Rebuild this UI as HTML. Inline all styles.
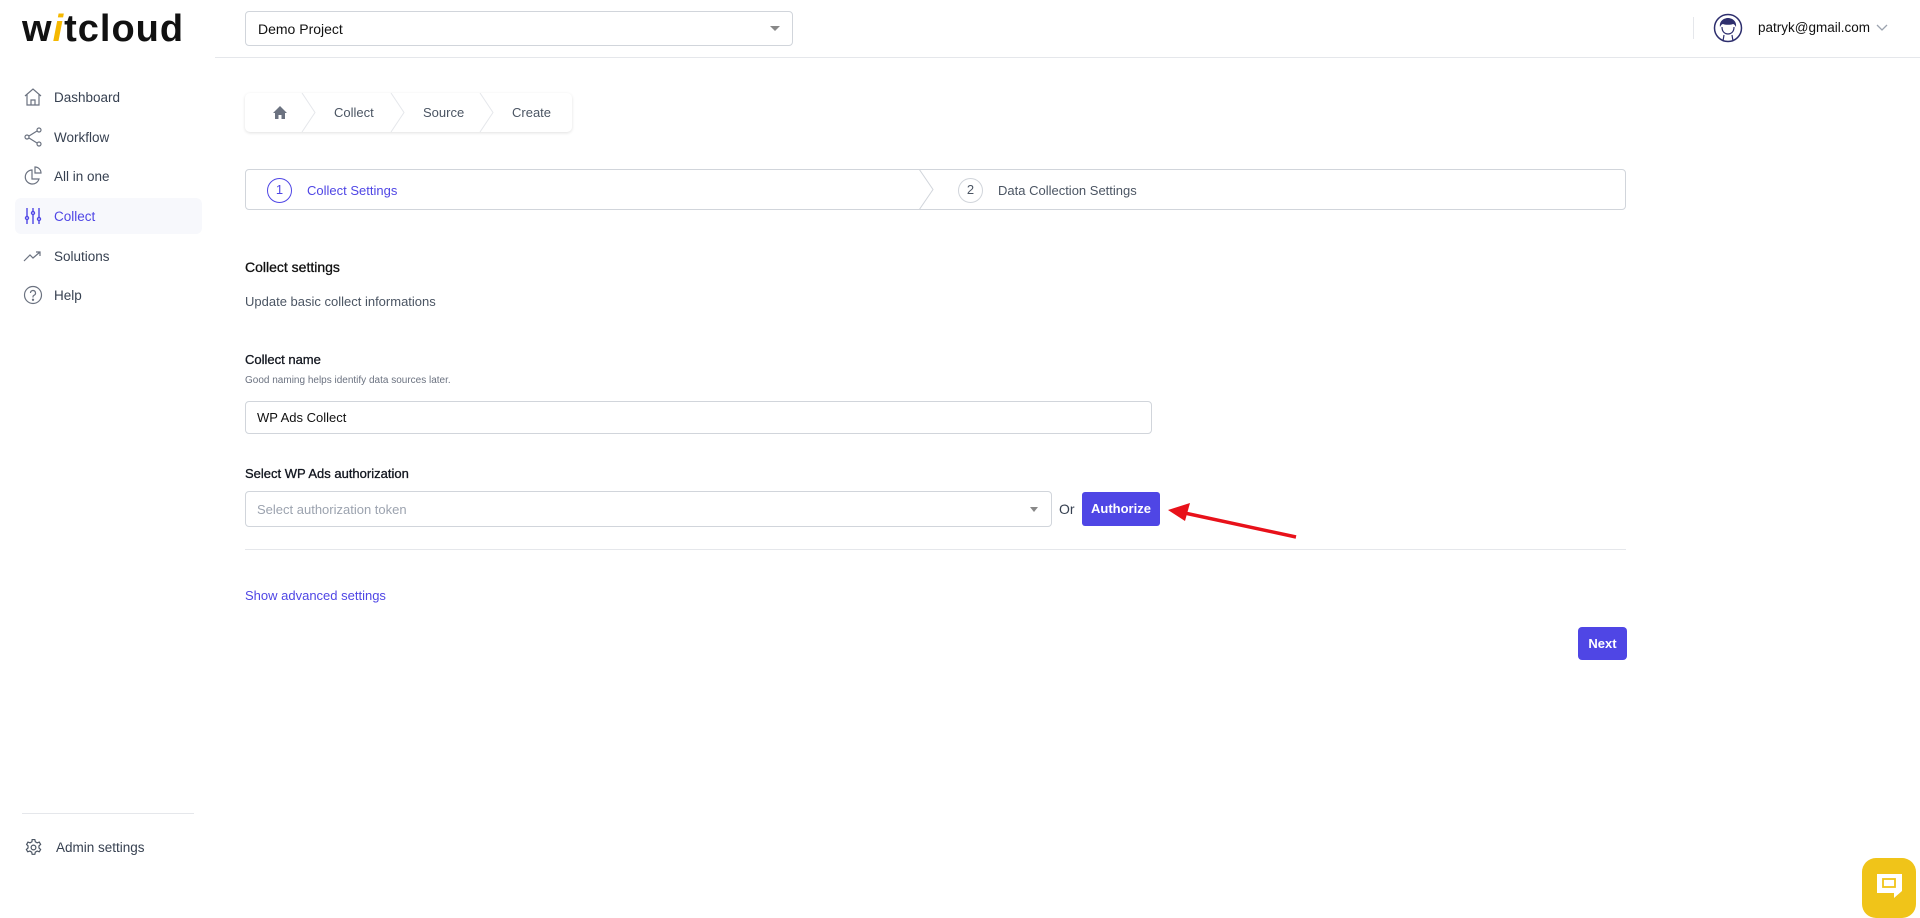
<!DOCTYPE html>
<html><head><meta charset="utf-8"><style>
*{box-sizing:border-box;margin:0;padding:0}
body{width:1920px;height:911px;overflow:hidden;background:#fff;font-family:"Liberation Sans",sans-serif;color:#1f2937;position:relative}
.abs{position:absolute}
.nav{position:absolute;left:15px;width:187px;height:36px;display:flex;align-items:center;font-size:13.5px;color:#374151;border-radius:6px}
.nav svg{position:absolute;left:8px}
.nav span{position:absolute;left:39px}
.lbl{position:absolute;font-size:14px;font-weight:bold;color:#111827}
</style></head><body>
<!-- logo -->
<div class="abs" style="left:22px;top:8px;font-size:38px;font-weight:bold;letter-spacing:1px;color:#111;font-family:'Liberation Sans',sans-serif">w<span style="color:#f5b800;font-style:italic">i</span>tcloud</div>
<!-- header -->
<div class="abs" style="left:215px;top:57px;width:1705px;height:1px;background:#e5e7eb"></div>
<div class="abs" style="left:245px;top:11px;width:548px;height:35px;border:1px solid #d1d5db;border-radius:4px;font-size:14px;padding:9px 12px;color:#111">Demo Project</div>
<div class="abs" style="left:770px;top:26px;border-left:5px solid transparent;border-right:5px solid transparent;border-top:5px solid #888"></div>
<div class="abs" style="left:1693px;top:17px;width:1px;height:22px;background:#e5e7eb"></div>
<svg class="abs" style="left:1713px;top:13px" width="30" height="30" viewBox="0 0 30 30"><circle cx="15" cy="15" r="13.5" fill="#fff" stroke="#2e2f6e" stroke-width="1.5"/><path d="M7 14c-1-6 4-9 8-9s9 3 8 9c-1-2-2-3-3-3-2 1-8 1-10 0-1 0-2 1-3 3z" fill="#2e2f6e"/><path d="M9 14c0 5 3 7 6 7s6-2 6-7" fill="none" stroke="#2e2f6e" stroke-width="1.2"/><path d="M11 22l-1 6M19 22l1 6" stroke="#2e2f6e" stroke-width="1.2"/></svg>
<div class="abs" style="left:1758px;top:20px;font-size:13.5px;color:#111">patryk@gmail.com</div>
<svg class="abs" style="left:1876px;top:24px" width="12" height="8" viewBox="0 0 12 8"><path d="M1 1l5 5 5-5" fill="none" stroke="#9ca3af" stroke-width="1.3"/></svg>
<!-- sidebar -->
<div class="nav" style="top:79px"><svg width="20" height="20" viewBox="0 0 20 20" fill="none" stroke="#6b7280" stroke-width="1.2"><path d="M2 9l8-7 8 7M4 7v11h12V7M8 18v-5h4v5"/></svg><span>Dashboard</span></div>
<div class="nav" style="top:119px"><svg width="20" height="20" viewBox="0 0 20 20" fill="none" stroke="#6b7280" stroke-width="1.2"><circle cx="4" cy="10" r="2"/><circle cx="16" cy="3" r="2"/><circle cx="16" cy="17" r="2"/><path d="M6 9l8-5M6 11l8 5"/></svg><span>Workflow</span></div>
<div class="nav" style="top:158px"><svg width="20" height="20" viewBox="0 0 20 20" fill="none" stroke="#6b7280" stroke-width="1.2"><path d="M9 4a7 7 0 1 0 7 9H9z"/><path d="M12 1a6 6 0 0 1 6 6h-6z"/></svg><span>All in one</span></div>
<div class="nav" style="top:198px;background:#f7f8fc;color:#4f46e5"><svg width="20" height="20" viewBox="0 0 20 20" fill="none" stroke="#4f46e5" stroke-width="1.4"><path d="M4 2v16M10 2v16M16 2v16"/><circle cx="4" cy="12" r="1.5" fill="#fff"/><circle cx="10" cy="7" r="1.5" fill="#fff"/><circle cx="16" cy="13" r="1.5" fill="#fff"/></svg><span>Collect</span></div>
<div class="nav" style="top:238px"><svg width="20" height="20" viewBox="0 0 20 20" fill="none" stroke="#6b7280" stroke-width="1.2"><path d="M1 15l6-6 3 3 7-6M13 6h4v4"/></svg><span>Solutions</span></div>
<div class="nav" style="top:277px"><svg width="20" height="20" viewBox="0 0 20 20" fill="none" stroke="#6b7280" stroke-width="1.2"><circle cx="10" cy="10" r="8.5"/><path d="M7.5 8a2.5 2.5 0 1 1 3.5 2.3c-.7.3-1 .8-1 1.5v.7"/><circle cx="10" cy="14.8" r=".6" fill="#6b7280"/></svg><span>Help</span></div>
<div class="abs" style="left:22px;top:813px;width:172px;height:1px;background:#e5e7eb"></div>
<svg class="abs" style="left:24px;top:838px" width="19" height="19" viewBox="0 0 24 24" fill="none" stroke="#4b5563" stroke-width="1.5"><circle cx="12" cy="12" r="3"/><path d="M10.3 2h3.4l.6 2.8 2.3 1.3 2.7-.9 1.7 2.9-2.1 1.9v2.6l2.1 1.9-1.7 2.9-2.7-.9-2.3 1.3-.6 2.8h-3.4l-.6-2.8-2.3-1.3-2.7.9-1.7-2.9 2.1-1.9v-2.6L3.3 8.1 5 5.2l2.7.9L10 4.8z"/></svg>
<div class="abs" style="left:56px;top:840px;font-size:13.5px;color:#374151">Admin settings</div>
<!-- breadcrumb -->
<div class="abs" style="left:245px;top:93px;width:327px;height:39px;border-radius:5px;box-shadow:0 1px 3px rgba(0,0,0,.12);background:#fff"></div>
<svg class="abs" style="left:245px;top:93px" width="327" height="39"><g fill="none" stroke="#e5e7eb"><path d="M57 0l13 19.5-13 19.5M146 0l13 19.5-13 19.5M235 0l13 19.5-13 19.5"/></g><path d="M28 20l7-7 7 7h-2v6h-3.5v-4h-3v4H30v-6z" fill="#6b7280"/></svg>
<div class="abs" style="left:334px;top:105px;font-size:13px;color:#4b5563">Collect</div>
<div class="abs" style="left:423px;top:105px;font-size:13px;color:#4b5563">Source</div>
<div class="abs" style="left:512px;top:105px;font-size:13px;color:#4b5563">Create</div>
<!-- steps -->
<div class="abs" style="left:245px;top:169px;width:1381px;height:41px;border:1px solid #d1d5db;border-radius:4px"></div>
<svg class="abs" style="left:918px;top:169px" width="20" height="41"><path d="M1 0l14 20.5L1 41" fill="none" stroke="#d1d5db"/></svg>
<div class="abs" style="left:267px;top:178px;width:25px;height:25px;border:1.5px solid #4f46e5;border-radius:50%;font-size:13px;color:#4f46e5;text-align:center;line-height:22px">1</div>
<div class="abs" style="left:307px;top:183px;font-size:13px;color:#4f46e5">Collect Settings</div>
<div class="abs" style="left:958px;top:178px;width:25px;height:25px;border:1.5px solid #d1d5db;border-radius:50%;font-size:13px;color:#4b5563;text-align:center;line-height:22px">2</div>
<div class="abs" style="left:998px;top:183px;font-size:13px;color:#4b5563">Data Collection Settings</div>
<!-- form -->
<div class="lbl" style="left:245px;top:259px;font-weight:normal;color:#111;-webkit-text-stroke:.3px #111">Collect settings</div>
<div class="abs" style="left:245px;top:294px;font-size:13px;color:#4b5563">Update basic collect informations</div>
<div class="lbl" style="left:245px;top:352px;font-size:13px;font-weight:normal;-webkit-text-stroke:.3px #111">Collect name</div>
<div class="abs" style="left:245px;top:375px;font-size:10px;color:#6b7280">Good naming helps identify data sources later.</div>
<div class="abs" style="left:245px;top:401px;width:907px;height:33px;border:1px solid #d1d5db;border-radius:4px;font-size:13px;padding:8px 11px;color:#111">WP Ads Collect</div>
<div class="lbl" style="left:245px;top:466px;font-size:13px;font-weight:normal;-webkit-text-stroke:.3px #111">Select WP Ads authorization</div>
<div class="abs" style="left:245px;top:491px;width:807px;height:36px;border:1px solid #d1d5db;border-radius:4px;font-size:13px;padding:10px 11px;color:#9ca3af">Select authorization token</div>
<div class="abs" style="left:1030px;top:507px;border-left:4px solid transparent;border-right:4px solid transparent;border-top:5px solid #888"></div>
<div class="abs" style="left:1059px;top:501px;font-size:14px;color:#374151">Or</div>
<div class="abs" style="left:1082px;top:492px;width:78px;height:34px;background:#4f46e5;border-radius:3px;color:#fff;font-size:13px;font-weight:bold;text-align:center;line-height:34px">Authorize</div>
<svg class="abs" style="left:1160px;top:500px" width="145" height="45"><path d="M136 37L20 12" stroke="#e8111a" stroke-width="3.5"/><path d="M8 10l22-7-5 18z" fill="#e8111a"/></svg>
<div class="abs" style="left:245px;top:549px;width:1381px;height:1px;background:#e5e7eb"></div>
<div class="abs" style="left:245px;top:588px;font-size:13px;color:#4f46e5">Show advanced settings</div>
<div class="abs" style="left:1578px;top:627px;width:49px;height:33px;background:#4f46e5;border-radius:4px;color:#fff;font-size:13px;font-weight:bold;text-align:center;line-height:33px">Next</div>
<!-- chat -->
<div class="abs" style="left:1862px;top:858px;width:54px;height:60px;background:#f0c419;border-radius:14px"></div>
<svg class="abs" style="left:1875px;top:871px" width="28" height="28" viewBox="0 0 28 28"><path d="M2 3h25v17l-8 7v-5H2z" fill="#fff"/><rect x="8" y="8" width="12" height="8" fill="none" stroke="#f0c419" stroke-width="1.8"/></svg>
</body></html>
